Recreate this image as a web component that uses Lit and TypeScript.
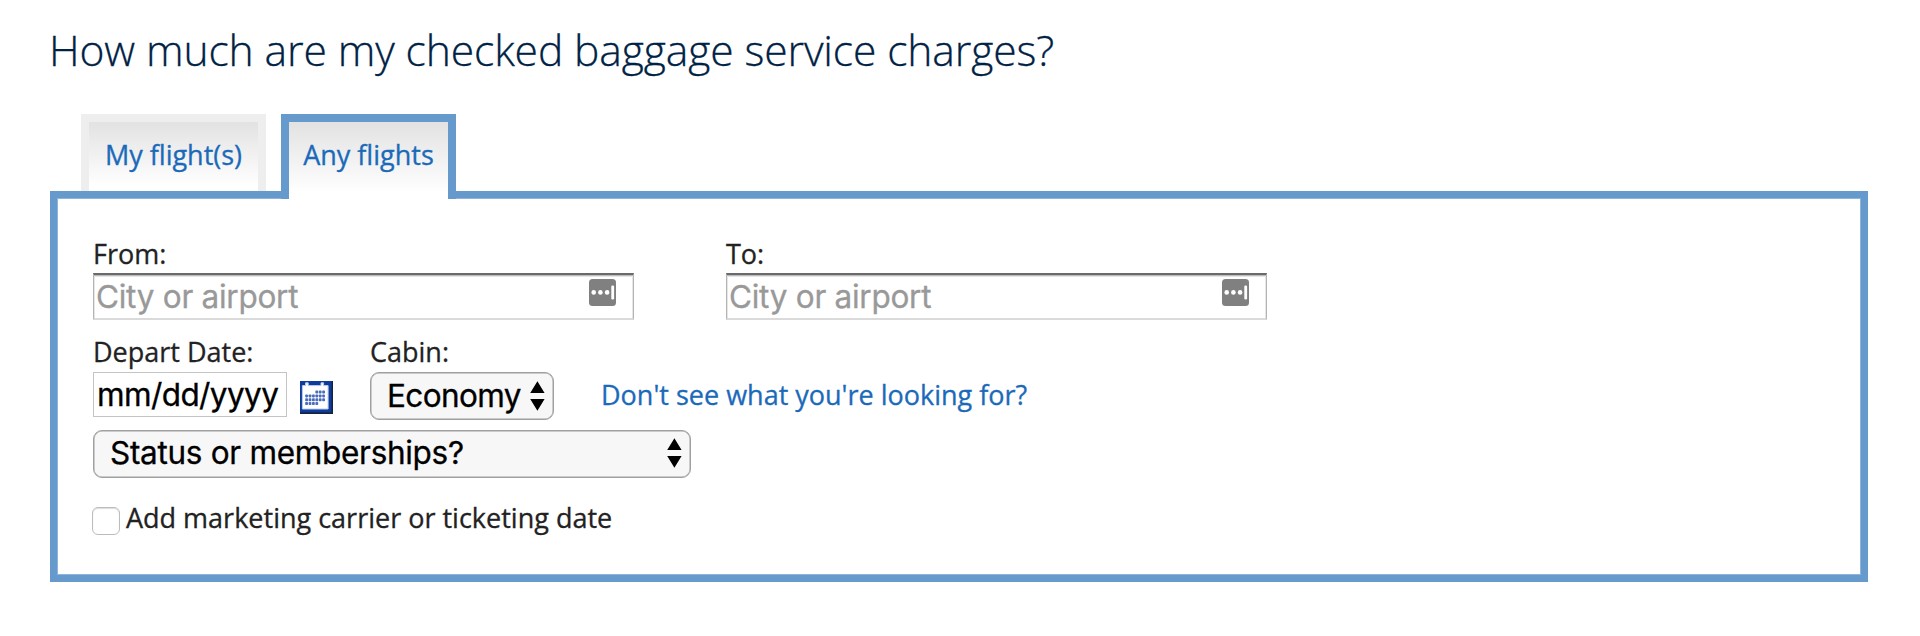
import { LitElement, html, svg, css } from "lit";
import { customElement, property, state } from "lit/decorators.js";
import { classMap } from "lit/directives/class-map.js";

const UPDOWN = html`<svg class="updown" width="15" height="30" viewBox="0 0 15 30">
  <path d="M7.4 .2 14.6 12H.2zM.2 18H14.6L7.4 29.8z" fill="#000" />
</svg>`;

@customElement("airport-field")
export class AirportField extends LitElement {
  @property() label = "";

  static styles = css`
    :host { display: block; width: 541px; font-family: "Open Sans", sans-serif; }
    label { display: block; height: 35px; line-height: 32px; font-size: 27px; color: #222; white-space: nowrap; }
    .box {
      box-sizing: border-box; height: 47px; display: flex; align-items: flex-start;
      border: 1px solid #b4b4b4; border-top: 2px solid #6a6a6a; border-bottom: 2px solid #dadada;
      box-shadow: inset 0 1px 0 #bdbdbd, inset 0 2px 0 #e6e6e6, inset 1px 0 0 #e6e6e6, inset -1px 0 0 #e6e6e6;
      padding: 0 17px 0 2px; background: #fff;
    }
    input {
      flex: 1; min-width: 0; height: 43px; border: 0; padding: 0; margin: 0; background: none; outline: 0;
      font: 31.5px Inter, sans-serif; letter-spacing: -0.27px; color: #000;
    }
    input::placeholder { color: #999; opacity: 1; }
    svg { margin-top: 4px; flex: none; }
  `;

  render() {
    return html`
      <label for="place">${this.label}</label>
      <div class="box">
        <input id="place" placeholder="City or airport" />
        <svg width="27" height="27" viewBox="0 0 27 27">
          <rect width="27" height="27" rx="3.5" fill="#808080" />
          <g fill="#fff">
            <circle cx="4.7" cy="13.4" r="2.3" /><circle cx="11.4" cy="13.4" r="2.3" /><circle cx="18.1" cy="13.4" r="2.3" />
            <rect x="22.3" y="6.6" width="2.8" height="13.8" rx="1.2" />
          </g>
        </svg>
      </div>`;
  }
}

@customElement("app-root")
export class AppRoot extends LitElement {
  @state() private active = 1;

  static styles = css`
    :host { display: flow-root; height: 636px; background: #fff; font-family: "Open Sans", sans-serif; color: #222; -webkit-text-stroke: 0.3px; }
    h1 { margin: 18px 0 0 49px; height: 60px; line-height: 62px; font-size: 42.6px; font-weight: 300; letter-spacing: -0.12px; color: #002244; white-space: nowrap; }
    .tabs { display: flex; gap: 15px; margin: 36px 0 0 81px; height: 77px; }
    .tab {
      box-sizing: border-box; height: 77px; width: 185px; text-align: center;
      border: 8px solid #eee; border-bottom: 0; background: linear-gradient(#e2e2e2, #fff 92%);
      font-size: 27px; line-height: 66px; color: #1b6ab9; white-space: nowrap; cursor: pointer;
    }
    .tab.second { width: 175px; }
    .tab.active { height: 85px; border-color: #6699cc; position: relative; }
    .panel {
      box-sizing: border-box; margin-left: 50px; width: 1818px; height: 391px; padding: 40px 0 0 36px;
      border: 7px solid #6699cc; box-shadow: inset 0 0 0 1px #8fb3da;
    }
    .row { display: flex; }
    .places { gap: 92px; }
    .trip { margin-top: 17px; }
    .caption { display: block; height: 35px; line-height: 30px; font-size: 27px; white-space: nowrap; }
    .depart { width: 277px; }
    .date { display: flex; align-items: center; height: 48px; }
    .date input {
      box-sizing: border-box; width: 194px; height: 45px; margin: -3px 13px 0 0; padding: 0 0 0 3px; outline: 0;
      border: 1px solid #c4c4c4; background: #fff; font: 31.5px Inter, sans-serif; letter-spacing: -0.6px; color: #000;
    }
    .calendar { display: block; margin-top: 3px; }
    .select {
      box-sizing: border-box; display: flex; align-items: center; justify-content: space-between; height: 48px;
      border: 1px solid #a0a0a0; border-radius: 9px; box-shadow: inset 0 0 0 .5px #a0a0a0; background: #f7f7f7;
      font: 31.5px/46px Inter, sans-serif; color: #000; white-space: nowrap;
    }
    .cabin .select { width: 184px; padding: 0 8px 0 16px; letter-spacing: -0.6px; }
    .status { width: 598px; margin-top: 10px; padding: 0 8px 2px 16px; letter-spacing: -0.3px; }
    .help { margin: 43px 0 0 47px; font-size: 27px; line-height: 30px; color: #1b6ab9; white-space: nowrap; text-decoration: none; }
    .extra { display: flex; margin-top: 24px; gap: 6px; font-size: 27px; line-height: 32px; white-space: nowrap; }
    .extra input {
      appearance: none; box-sizing: border-box; width: 28px; height: 28px; margin: 5px 0 0 -1px; flex: none;
      border: 1px solid #bcbcbc; border-radius: 6px; background: #fff; box-shadow: inset 0 1px 1px #ddd;
    }
  `;

  private calendar() {
    const dots: [number, number][] = [
      [3, 0], [4, 0], [5, 0],
      [0, 1], [1, 1], [2, 1], [3, 1], [4, 1], [5, 1],
      [0, 2], [1, 2], [2, 2], [3, 2], [4, 2], [5, 2],
      [0, 3], [1, 3], [2, 3], [3, 3],
    ];
    return html`<svg class="calendar" width="33" height="33" viewBox="0 0 33 33">
      <rect width="33" height="33" fill="#16233f" />
      <rect width="31.5" height="31.3" fill="#0d3c9e" />
      <path d="M2.4 4.600h3.200v-2.800h2.600v2.800h12.800v-2.800h2.600v2.800h4.500v23.400h-25.700z" fill="#fff" stroke="#b9caec" stroke-width="1" stroke-linejoin="round" />
      ${dots.map(([c, r]) => svg`<rect x=${5.2 + c * 3.4} y=${9.6 + r * 3.8} width="2.8" height="3" rx=".8" fill="#4a6cbc" />`)}
    </svg>`;
  }

  render() {
    return html`
      <h1>How much are my checked baggage service charges?</h1>
      <div class="tabs" role="tablist">
        ${["My flight(s)", "Any flights"].map((name, i) => html`
          <div role="tab" class=${classMap({ tab: true, second: i === 1, active: i === this.active })}
            @click=${() => (this.active = i)}>${name}</div>`)}
      </div>
      <div class="panel">
        <div class="row places">
          <airport-field label="From:"></airport-field>
          <airport-field label="To:"></airport-field>
        </div>
        <div class="row trip">
          <div class="depart">
            <label class="caption" for="date">Depart Date:</label>
            <div class="date"><input id="date" value="mm/dd/yyyy" />${this.calendar()}</div>
          </div>
          <div class="cabin">
            <span class="caption">Cabin:</span>
            <div class="select"><span>Economy</span>${UPDOWN}</div>
          </div>
          <a class="help">Don't see what you're looking for?</a>
        </div>
        <div class="select status"><span>Status or memberships?</span>${UPDOWN}</div>
        <label class="extra"><input type="checkbox" /><span>Add marketing carrier or ticketing date</span></label>
      </div>`;
  }
}
